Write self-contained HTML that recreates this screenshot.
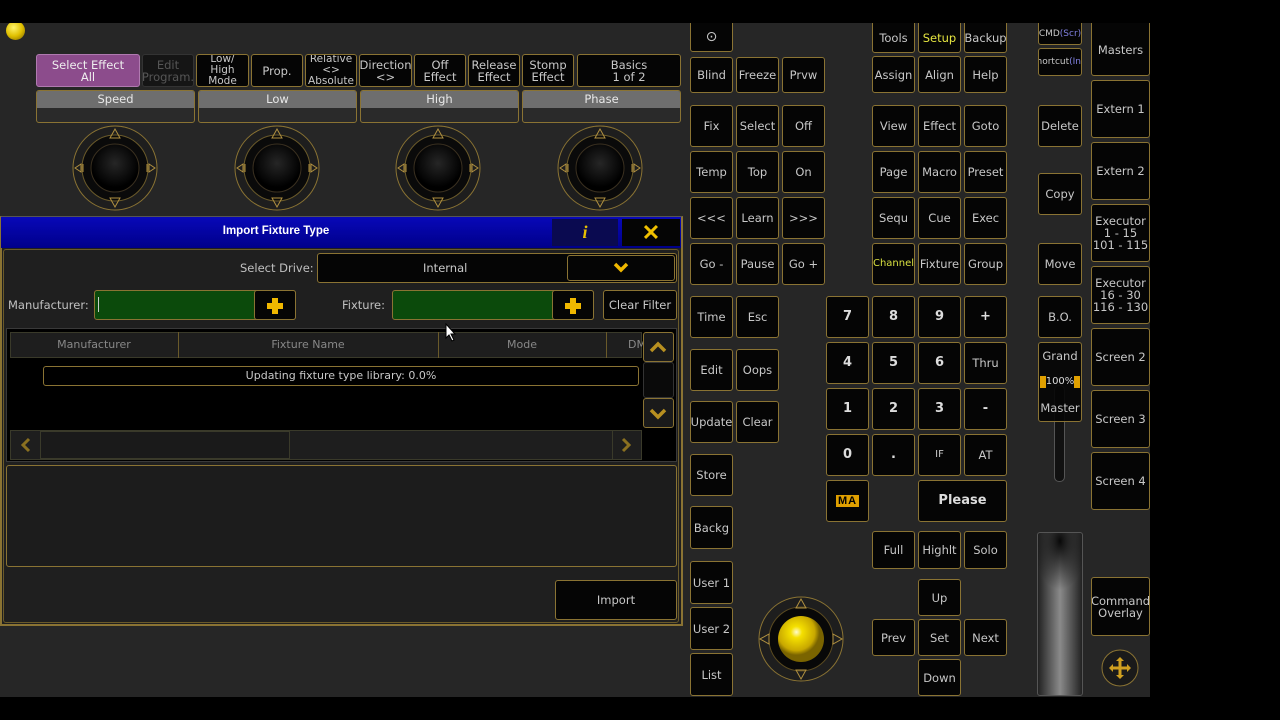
<!DOCTYPE html>
<html><head><meta charset="utf-8"><style>
*{box-sizing:border-box;margin:0;padding:0}
body{width:1280px;height:720px;background:#000;position:relative;overflow:hidden;font-family:"DejaVu Sans","Liberation Sans",sans-serif;color:#c8c8c8}
.bg{position:absolute;left:0;top:23px;width:1150px;height:674px;background:#262626}
.b{position:absolute;background:#050505;border:1px solid #8a7333;border-radius:3px;display:flex;align-items:center;justify-content:center;text-align:center;font-size:11.5px;line-height:12px;color:#c8c8c8;white-space:nowrap;overflow:hidden}
.n{font-weight:bold;font-size:13px;color:#ddd}
.t{font-size:10.5px;line-height:11px}
.lab{position:absolute;border:1px solid #8a7333;border-radius:3px;background:#2a2a2a;overflow:hidden}
.lab div{height:17px;background:#6e6e6e;color:#e8e8e8;font-size:11.5px;text-align:center;line-height:17px}
.a{position:absolute;font-size:11.5px;color:#c0c0c0}
</style></head><body>
<div class="bg"></div>
<div style="position:absolute;left:6px;top:21px;width:19px;height:19px;border-radius:50%;background:radial-gradient(circle at 40% 35%,#fff36a,#e0c000 50%,#7a6000)"></div>

<div class="b" style="left:36px;top:54px;width:104px;height:33px;background:#8c4c8c;border-color:#b07ab0;color:#eee">Select Effect<br>All</div>
<div class="b" style="left:142px;top:54px;width:52px;height:33px;color:#555;background:#151515;border-color:#333">Edit<br>Program.</div>
<div class="b t" style="left:196px;top:54px;width:53px;height:33px">Low/<br>High<br>Mode</div>
<div class="b" style="left:251px;top:54px;width:52px;height:33px">Prop.</div>
<div class="b t" style="left:305px;top:54px;width:52px;height:33px">Relative<br>&lt;&gt;<br>Absolute</div>
<div class="b" style="left:359px;top:54px;width:53px;height:33px">Direction<br>&lt;&gt;</div>
<div class="b" style="left:414px;top:54px;width:52px;height:33px">Off<br>Effect</div>
<div class="b" style="left:468px;top:54px;width:52px;height:33px">Release<br>Effect</div>
<div class="b" style="left:522px;top:54px;width:52px;height:33px">Stomp<br>Effect</div>
<div class="b" style="left:577px;top:54px;width:104px;height:33px">Basics<br>1 of 2</div>

<div class="lab" style="left:36px;top:90px;width:159px;height:33px"><div>Speed</div></div>
<div class="lab" style="left:198px;top:90px;width:159px;height:33px"><div>Low</div></div>
<div class="lab" style="left:360px;top:90px;width:159px;height:33px"><div>High</div></div>
<div class="lab" style="left:522px;top:90px;width:159px;height:33px"><div>Phase</div></div>

<svg style="position:absolute;left:0;top:120px" width="690" height="100">
<defs><radialGradient id="k" cx="50%" cy="40%"><stop offset="0" stop-color="#262626"/><stop offset="1" stop-color="#000"/></radialGradient>
<g id="knob"><circle r="42" fill="#1e1e1e" stroke="#8a7333"/><circle r="33" fill="#0a0a0a" stroke="#6a5a2a"/><circle r="24" fill="url(#k)" stroke="#3a3020"/>
<path d="M-5,-30 L0,-39 L5,-30Z M-5,30 L0,39 L5,30Z M-34,-4 L-40,0 L-34,4Z M34,-4 L40,0 L34,4Z" fill="none" stroke="#b09040"/>
<path d="M-32,-4 v8 M32,-4 v8" stroke="#b09040"/></g></defs>
<use href="#knob" x="115" y="48"/><use href="#knob" x="277" y="48"/><use href="#knob" x="438" y="48"/><use href="#knob" x="600" y="48"/>
</svg>

<div style="position:absolute;left:0;top:216px;width:683px;height:410px;background:#1f1f1f;border:2px solid #8a7333;border-top:1px solid #555"></div>
<div style="position:absolute;left:1px;top:217px;width:680px;height:31px;background:linear-gradient(#0808b8,#00008a);"></div>
<div style="position:absolute;left:0;top:225px;width:552px;text-align:center;font-size:11.5px;font-weight:bold;color:#fff;font-family:'Liberation Sans',sans-serif">Import Fixture Type</div>
<div style="position:absolute;left:552px;top:219px;width:66px;height:27px;background:#0a0a50;color:#e8c000;font:italic bold 18px 'Liberation Serif',serif;text-align:center;line-height:27px">i</div>
<div style="position:absolute;left:622px;top:219px;width:58px;height:27px;background:#050505;color:#f0c000;font:bold 22px 'Liberation Sans',sans-serif;text-align:center;line-height:27px">✕</div>
<div style="position:absolute;left:3px;top:249px;width:676px;height:374px;border:1px solid #6a5a2a;border-radius:3px"></div>

<div class="a" style="left:240px;top:261px">Select Drive:</div>
<div class="b" style="left:317px;top:253px;width:360px;height:30px;justify-content:flex-start;padding-left:105px">Internal</div>
<div class="b" style="left:567px;top:255px;width:108px;height:26px"></div>
<svg style="position:absolute;left:613px;top:262px" width="16" height="12"><path d="M2,2 L8,8 L14,2" stroke="#f0b800" stroke-width="3.5" fill="none"/></svg>

<div class="a" style="left:8px;top:298px">Manufacturer:</div>
<div style="position:absolute;left:94px;top:290px;width:202px;height:30px;background:#0b4a0b;border:1px solid #8a7333;border-radius:3px"></div>
<div style="position:absolute;left:98px;top:297px;width:1px;height:15px;background:#ccc"></div>
<div class="b" style="left:254px;top:290px;width:42px;height:30px"></div>
<div class="a" style="left:342px;top:298px">Fixture:</div>
<div style="position:absolute;left:392px;top:290px;width:202px;height:30px;background:#0b4a0b;border:1px solid #8a7333;border-radius:3px"></div>
<div class="b" style="left:552px;top:290px;width:42px;height:30px"></div>
<svg style="position:absolute;left:0;top:0" width="700" height="330"><g fill="#f0b800"><rect x="272" y="298" width="6" height="16"/><rect x="267" y="303" width="16" height="6"/><rect x="570" y="298" width="6" height="16"/><rect x="565" y="303" width="16" height="6"/></g></svg>
<div class="b" style="left:603px;top:290px;width:74px;height:30px">Clear Filter</div>

<div style="position:absolute;left:6px;top:328px;width:671px;height:134px;border:1px solid #3a3a3a;background:#000"></div>
<div style="position:absolute;left:10px;top:332px;width:632px;height:26px;background:#1e1e1e;border:1px solid #3a3a2a"></div>
<div style="position:absolute;left:178px;top:332px;width:1px;height:26px;background:#6a5a2a"></div>
<div style="position:absolute;left:438px;top:332px;width:1px;height:26px;background:#6a5a2a"></div>
<div style="position:absolute;left:606px;top:332px;width:1px;height:26px;background:#6a5a2a"></div>
<div class="a" style="left:10px;top:338px;width:168px;text-align:center;color:#888;font-size:11px">Manufacturer</div>
<div class="a" style="left:178px;top:338px;width:260px;text-align:center;color:#888;font-size:11px">Fixture Name</div>
<div class="a" style="left:438px;top:338px;width:168px;text-align:center;color:#888;font-size:11px">Mode</div>
<div class="a" style="left:628px;top:338px;color:#888;font-size:11px">DM</div>
<div class="b" style="left:643px;top:332px;width:31px;height:30px;background:#1a1a1a"></div>
<div class="b" style="left:643px;top:362px;width:31px;height:36px;background:#0a0a0a;border-color:#333"></div>
<div class="b" style="left:643px;top:398px;width:31px;height:30px;background:#1a1a1a"></div>
<svg style="position:absolute;left:643px;top:332px" width="32" height="100"><path d="M8,19 L15,12 L22,19" stroke="#b89020" stroke-width="3.5" fill="none"/><path d="M8,78 L15,85 L22,78" stroke="#b89020" stroke-width="3.5" fill="none"/></svg>
<div class="b" style="left:43px;top:366px;width:596px;height:20px;font-size:11px;background:#000">Updating fixture type library: 0.0%</div>
<div style="position:absolute;left:10px;top:430px;width:632px;height:30px;background:#1e1e1e;border:1px solid #3a3a2a"></div>
<div style="position:absolute;left:40px;top:431px;width:250px;height:28px;border:1px solid #3a3a2a;background:#1a1a1a"></div>
<div style="position:absolute;left:612px;top:431px;width:1px;height:28px;background:#3a3a2a"></div>
<svg style="position:absolute;left:10px;top:430px" width="632" height="30"><path d="M19,9 L13,15 L19,21" stroke="#8a7020" stroke-width="3" fill="none"/><path d="M613,9 L619,15 L613,21" stroke="#8a7020" stroke-width="3" fill="none"/></svg>
<div style="position:absolute;left:6px;top:465px;width:671px;height:102px;border:1px solid #8a7333;border-radius:3px;background:#1c1c1c"></div>
<div class="b" style="left:555px;top:580px;width:122px;height:40px">Import</div>
<svg style="position:absolute;left:445px;top:323px" width="12" height="20"><path d="M1,1 L1,15 L4,12 L7,18 L9,17 L6,11 L10,11Z" fill="#fff" stroke="#000"/></svg>

<div class="b" style="left:690px;top:18px;width:43px;height:34px;font-size:14px;padding-top:4px">⊙</div>
<div class="b" style="left:690px;top:57px;width:43px;height:36px">Blind</div>
<div class="b" style="left:736px;top:57px;width:43px;height:36px">Freeze</div>
<div class="b" style="left:782px;top:57px;width:43px;height:36px">Prvw</div>
<div class="b" style="left:690px;top:105px;width:43px;height:42px">Fix</div>
<div class="b" style="left:736px;top:105px;width:43px;height:42px">Select</div>
<div class="b" style="left:782px;top:105px;width:43px;height:42px">Off</div>
<div class="b" style="left:690px;top:151px;width:43px;height:42px">Temp</div>
<div class="b" style="left:736px;top:151px;width:43px;height:42px">Top</div>
<div class="b" style="left:782px;top:151px;width:43px;height:42px">On</div>
<div class="b" style="left:690px;top:197px;width:43px;height:42px">&lt;&lt;&lt;</div>
<div class="b" style="left:736px;top:197px;width:43px;height:42px">Learn</div>
<div class="b" style="left:782px;top:197px;width:43px;height:42px">&gt;&gt;&gt;</div>
<div class="b" style="left:690px;top:243px;width:43px;height:42px">Go -</div>
<div class="b" style="left:736px;top:243px;width:43px;height:42px">Pause</div>
<div class="b" style="left:782px;top:243px;width:43px;height:42px">Go +</div>
<div class="b" style="left:690px;top:296px;width:43px;height:42px">Time</div>
<div class="b" style="left:736px;top:296px;width:43px;height:42px">Esc</div>
<div class="b" style="left:690px;top:349px;width:43px;height:42px">Edit</div>
<div class="b" style="left:736px;top:349px;width:43px;height:42px">Oops</div>
<div class="b" style="left:690px;top:401px;width:43px;height:42px">Update</div>
<div class="b" style="left:736px;top:401px;width:43px;height:42px">Clear</div>
<div class="b" style="left:690px;top:454px;width:43px;height:42px">Store</div>
<div class="b" style="left:690px;top:506px;width:43px;height:43px">Backg</div>
<div class="b" style="left:690px;top:561px;width:43px;height:43px">User 1</div>
<div class="b" style="left:690px;top:607px;width:43px;height:43px">User 2</div>
<div class="b" style="left:690px;top:653px;width:43px;height:43px">List</div>

<div class="b" style="left:872px;top:18px;width:43px;height:35px;padding-top:5px">Tools</div>
<div class="b" style="left:918px;top:18px;width:43px;height:35px;padding-top:5px;color:#e6e640">Setup</div>
<div class="b" style="left:964px;top:18px;width:43px;height:35px;padding-top:5px">Backup</div>
<div class="b" style="left:872px;top:56px;width:43px;height:37px">Assign</div>
<div class="b" style="left:918px;top:56px;width:43px;height:37px">Align</div>
<div class="b" style="left:964px;top:56px;width:43px;height:37px">Help</div>
<div class="b" style="left:872px;top:105px;width:43px;height:42px">View</div>
<div class="b" style="left:918px;top:105px;width:43px;height:42px">Effect</div>
<div class="b" style="left:964px;top:105px;width:43px;height:42px">Goto</div>
<div class="b" style="left:872px;top:151px;width:43px;height:42px">Page</div>
<div class="b" style="left:918px;top:151px;width:43px;height:42px">Macro</div>
<div class="b" style="left:964px;top:151px;width:43px;height:42px">Preset</div>
<div class="b" style="left:872px;top:197px;width:43px;height:42px">Sequ</div>
<div class="b" style="left:918px;top:197px;width:43px;height:42px">Cue</div>
<div class="b" style="left:964px;top:197px;width:43px;height:42px">Exec</div>
<div class="b" style="left:872px;top:243px;width:43px;height:42px;color:#d8e040;font-size:10px">Channel</div>
<div class="b" style="left:918px;top:243px;width:43px;height:42px">Fixture</div>
<div class="b" style="left:964px;top:243px;width:43px;height:42px">Group</div>

<div class="b n" style="left:826px;top:296px;width:43px;height:42px">7</div>
<div class="b n" style="left:872px;top:296px;width:43px;height:42px">8</div>
<div class="b n" style="left:918px;top:296px;width:43px;height:42px">9</div>
<div class="b n" style="left:964px;top:296px;width:43px;height:42px">+</div>
<div class="b n" style="left:826px;top:342px;width:43px;height:42px">4</div>
<div class="b n" style="left:872px;top:342px;width:43px;height:42px">5</div>
<div class="b n" style="left:918px;top:342px;width:43px;height:42px">6</div>
<div class="b" style="left:964px;top:342px;width:43px;height:42px">Thru</div>
<div class="b n" style="left:826px;top:388px;width:43px;height:42px">1</div>
<div class="b n" style="left:872px;top:388px;width:43px;height:42px">2</div>
<div class="b n" style="left:918px;top:388px;width:43px;height:42px">3</div>
<div class="b n" style="left:964px;top:388px;width:43px;height:42px">-</div>
<div class="b n" style="left:826px;top:434px;width:43px;height:42px">0</div>
<div class="b n" style="left:872px;top:434px;width:43px;height:42px">.</div>
<div class="b" style="left:918px;top:434px;width:43px;height:42px;font-size:10px">IF</div>
<div class="b" style="left:964px;top:434px;width:43px;height:42px">AT</div>
<div class="b" style="left:826px;top:480px;width:43px;height:42px"><span style="background:#e0a000;color:#000;font:bold 11px 'Liberation Sans',sans-serif;padding:0 2px;letter-spacing:1px">MA</span></div>
<div class="b" style="left:918px;top:480px;width:89px;height:42px;font-weight:bold;font-size:13px;color:#ddd">Please</div>
<div class="b" style="left:872px;top:531px;width:43px;height:38px">Full</div>
<div class="b" style="left:918px;top:531px;width:43px;height:38px">Highlt</div>
<div class="b" style="left:964px;top:531px;width:43px;height:38px">Solo</div>
<div class="b" style="left:918px;top:579px;width:43px;height:37px">Up</div>
<div class="b" style="left:872px;top:619px;width:43px;height:37px">Prev</div>
<div class="b" style="left:918px;top:619px;width:43px;height:37px">Set</div>
<div class="b" style="left:964px;top:619px;width:43px;height:37px">Next</div>
<div class="b" style="left:918px;top:659px;width:43px;height:37px">Down</div>

<svg style="position:absolute;left:756px;top:595px" width="90" height="90">
<defs><radialGradient id="y" cx="40%" cy="35%"><stop offset="0" stop-color="#fffbd0"/><stop offset=".25" stop-color="#f5e000"/><stop offset=".8" stop-color="#c8a800"/><stop offset="1" stop-color="#7a6400"/></radialGradient></defs>
<circle cx="45" cy="44" r="42" fill="#1e1e1e" stroke="#8a7333"/><circle cx="45" cy="44" r="32" fill="#080808" stroke="#5a4a20"/>
<circle cx="45" cy="44" r="23" fill="url(#y)"/>
<path d="M40,13 L45,4 L50,13Z M40,75 L45,84 L50,75Z M13,39 L4,44 L13,49Z M77,39 L86,44 L77,49Z" fill="none" stroke="#b09040"/>
</svg>

<div class="b" style="left:1038px;top:18px;width:44px;height:27px;font-size:9px;line-height:10px;padding-top:4px">CMD<br><span style="color:#8080e0">(Scr)</span></div>
<div class="b" style="left:1038px;top:48px;width:44px;height:28px;font-size:9px;line-height:10px">Shortcut<br><span style="color:#8080e0">(Ins)</span></div>
<div class="b" style="left:1038px;top:105px;width:44px;height:42px">Delete</div>
<div class="b" style="left:1038px;top:173px;width:44px;height:42px">Copy</div>
<div class="b" style="left:1038px;top:243px;width:44px;height:42px">Move</div>
<div class="b" style="left:1038px;top:296px;width:44px;height:42px">B.O.</div>
<div style="position:absolute;left:1054px;top:385px;width:11px;height:97px;border:1px solid #555;border-radius:5px;background:#111"></div>
<div class="b" style="left:1038px;top:342px;width:44px;height:80px;flex-direction:column;justify-content:space-around;background:rgba(5,5,5,.9)"><span>Grand</span><span style="color:#ddd;border-left:6px solid #e0a000;border-right:6px solid #e0a000;font-size:10px">100%</span><span>Master</span></div>
<div style="position:absolute;left:1037px;top:532px;width:46px;height:164px;border:1px solid #555;border-radius:3px;background:radial-gradient(ellipse 60% 30% at 50% 5%,#080808,transparent),linear-gradient(90deg,#222,#8a8a8a 50%,#222)"></div>

<div class="b" style="left:1091px;top:18px;width:59px;height:58px;padding-top:5px">Masters</div>
<div class="b" style="left:1091px;top:80px;width:59px;height:58px">Extern 1</div>
<div class="b" style="left:1091px;top:142px;width:59px;height:58px">Extern 2</div>
<div class="b" style="left:1091px;top:204px;width:59px;height:58px">Executor<br>1 - 15<br>101 - 115</div>
<div class="b" style="left:1091px;top:266px;width:59px;height:58px">Executor<br>16 - 30<br>116 - 130</div>
<div class="b" style="left:1091px;top:328px;width:59px;height:58px">Screen 2</div>
<div class="b" style="left:1091px;top:390px;width:59px;height:58px">Screen 3</div>
<div class="b" style="left:1091px;top:452px;width:59px;height:58px">Screen 4</div>
<div class="b" style="left:1091px;top:577px;width:59px;height:59px">Command<br>Overlay</div>
<svg style="position:absolute;left:1101px;top:649px" width="40" height="40"><circle cx="19" cy="19" r="18" fill="#1a1a1a" stroke="#8a7333"/><path d="M19,10 v18 M10,19 h18" stroke="#d0a020" stroke-width="3"/><path d="M15,12 L19,8 L23,12Z M15,26 L19,30 L23,26Z M12,15 L8,19 L12,23Z M26,15 L30,19 L26,23Z" fill="#d0a020"/></svg>
<div style="position:absolute;left:0;top:0;width:1280px;height:23px;background:#000"></div>
</body></html>
